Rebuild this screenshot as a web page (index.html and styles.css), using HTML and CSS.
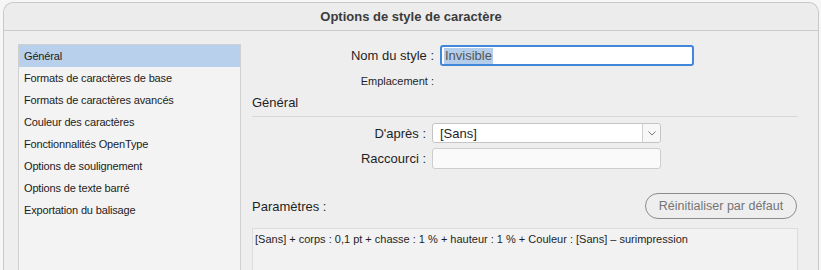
FILE: index.html
```html
<!DOCTYPE html>
<html lang="fr">
<head>
    <meta charset="UTF-8">
    <title>Options de style de caractère</title>
    <link rel="stylesheet" href="styles.css">
</head>
<body>
    <div class="dialog">
        <header class="dialog-title">Options de style de caractère</header>

        <div class="dialog-body">
            <ul class="section-list">
                <li class="selected">Général</li>
                <li>Formats de caractères de base</li>
                <li>Formats de caractères avancés</li>
                <li>Couleur des caractères</li>
                <li>Fonctionnalités OpenType</li>
                <li>Options de soulignement</li>
                <li>Options de texte barré</li>
                <li>Exportation du balisage</li>
            </ul>

            <main class="panel">
                <div class="row row-name">
                    <label class="label">Nom du style :</label>
                    <div class="field field-focus"><span class="sel-text">Invisible</span></div>
                </div>
                <div class="row row-place">
                    <span class="label small">Emplacement :</span>
                </div>

                <h2 class="group-title">Général</h2>

                <div class="row row-based">
                    <label class="label">D'après :</label>
                    <div class="field select">
                        <span class="select-value">[Sans]</span>
                        <span class="select-btn">
                            <svg width="8" height="5" viewBox="0 0 8 5"><path d="M0.5 0.5 L4 4 L7.5 0.5" fill="none" stroke="#777" stroke-width="1"/></svg>
                        </span>
                    </div>
                </div>
                <div class="row row-shortcut">
                    <label class="label">Raccourci :</label>
                    <div class="field plain"></div>
                </div>

                <div class="params-head">
                    <span>Paramètres :</span>
                    <button class="reset-btn">Réinitialiser par défaut</button>
                </div>
                <div class="params-box">[Sans] + corps : 0,1 pt + chasse : 1 % + hauteur : 1 % + Couleur : [Sans] – surimpression</div>
            </main>
        </div>
    </div>
</body>
</html>
```

FILE: styles.css
```css
/* --- base --- */
* {
    margin: 0;
    padding: 0;
    box-sizing: border-box;
}

html, body {
    height: 270px;
    overflow: hidden;
}

body {
    font-family: 'Liberation Sans', Arial, sans-serif;
    background-color: #f6f6f6;
    color: #1f1f1f;
}

/* --- window --- */
.dialog {
    margin: 2px 0 0 3px;
    width: 816px;
    height: 268px;
    overflow: hidden;
    background-color: #eeeeee;
    border: 1px solid #c9c9c9;
    border-bottom: none;
    border-radius: 10px 10px 0 0;
}

.dialog-title {
    height: 28px;
    line-height: 27px;
    text-align: center;
    font-size: 13px;
    font-weight: 700;
    color: #3b3b3b;
    border-bottom: 1px solid #cbcbcb;
    border-radius: 10px 10px 0 0;
    background-color: #ececed;
}

.dialog-body {
    display: flex;
    padding: 13px 0 0 14px;
}

/* --- left list --- */
.section-list {
    list-style: none;
    width: 223px;
    height: 240px;
    background-color: #f3f3f3;
    border: 1px solid #d0d0d0;
    font-size: 11px;
    letter-spacing: -0.15px;
}
.section-list li {
    height: 22px;
    line-height: 22px;
    padding-left: 5px;
    color: #1c1c1c;
}
.section-list li.selected {
    background-color: #b8d0ec;
}

/* --- right panel --- */
.panel {
    margin-left: 11px;
    width: 546px;
    padding-top: 1px;
}

.row {
    display: flex;
    align-items: center;
}
.label {
    font-size: 13px;
    text-align: right;
    color: #1f1f1f;
}
.label.small {
    font-size: 11px;
}

.row-name .label,
.row-place .label {
    width: 182px;
}
.row-name {
    gap: 6px;
}
.row-place {
    margin-top: 8px;
    height: 14px;
}

.field {
    background-color: #fff;
    font-size: 13px;
}
.field-focus {
    width: 254px;
    height: 21px;
    border: 2px solid #4286d9;
    border-radius: 3px;
    padding: 0 2px;
    display: flex;
    align-items: center;
}
.sel-text {
    background-color: #b4cdeb;
    color: #555;
    line-height: 16px;
    padding: 0 1px;
}

.group-title {
    margin-top: 7px;
    font-size: 13px;
    font-weight: 400;
    line-height: 16px;
    padding-bottom: 5px;
    border-bottom: 1px solid #d8d8d8;
}

.row-based,
.row-shortcut {
    gap: 6px;
}
.row-based .label,
.row-shortcut .label {
    width: 174px;
}
.row-based {
    margin-top: 6px;
}
.row-shortcut {
    margin-top: 5px;
}

.select {
    width: 229px;
    height: 20px;
    border: 1px solid #c4c4c4;
    border-radius: 3px;
    display: flex;
    align-items: center;
}
.select-value {
    flex: 1;
    padding-left: 7px;
}
.select-btn {
    width: 18px;
    height: 100%;
    border-left: 1px solid #cfcfcf;
    background-color: #f7f7f7;
    border-radius: 0 3px 3px 0;
    display: flex;
    align-items: center;
    justify-content: center;
}

.plain {
    width: 229px;
    height: 21px;
    border: 1px solid #cdcdcd;
    border-radius: 3px;
    background-color: #fafafa;
}

/* --- parameters --- */
.params-head {
    margin-top: 24px;
    display: flex;
    align-items: center;
    justify-content: space-between;
    font-size: 13px;
    padding-right: 1px;
}
.reset-btn {
    width: 152px;
    height: 26px;
    border: 1px solid #8c8c8c;
    border-radius: 13px;
    background: none;
    font-family: inherit;
    font-size: 12.5px;
    color: #747474;
}

.params-box {
    margin-top: 9px;
    width: 546px;
    height: 50px;
    background-color: #f2f2f2;
    border: 1px solid #dcdcdc;
    font-size: 11px;
    line-height: 14px;
    padding: 3px 2px;
}
```
